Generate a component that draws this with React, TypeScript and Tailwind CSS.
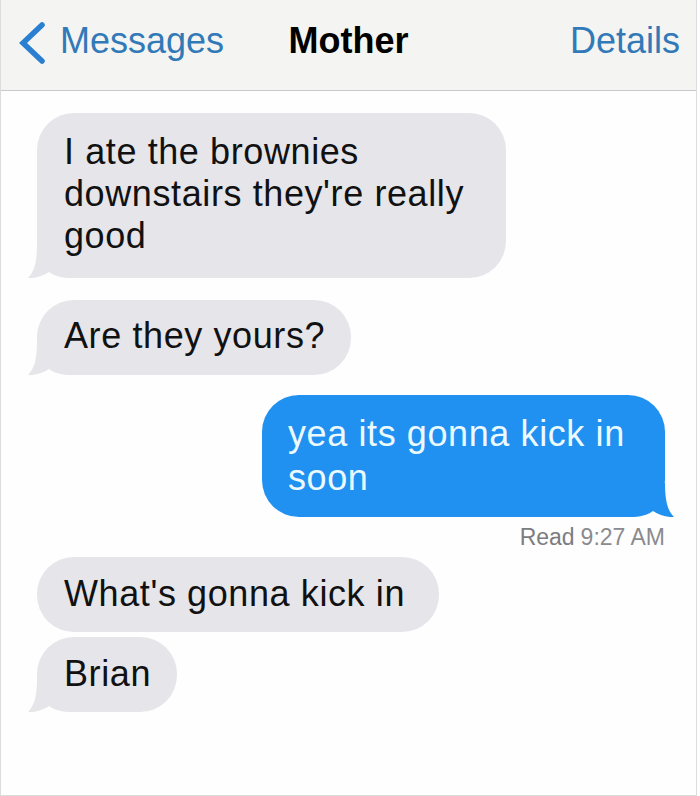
import React from "react";

const font = { fontFamily: '"Liberation Sans", Arial, sans-serif' };

function TailLeft({ color }: { color: string }) {
  return (
    <svg
      width="46"
      height="42"
      viewBox="0 0 46 42"
      className="absolute bottom-0 left-[-10px]"
    >
      <path
        d="M10 8 C10 27 7 36 1 42 C9 42.5 16 40 22 36 C28 40 34 42 46 42 L46 22 Z"
        fill={color}
      />
    </svg>
  );
}

function TailRight({ color }: { color: string }) {
  return (
    <svg
      width="46"
      height="42"
      viewBox="0 0 46 42"
      className="absolute bottom-0 right-[-10px]"
    >
      <path
        d="M36 8 C36 27 39 36 45 42 C37 42.5 30 40 24 36 C18 40 12 42 0 42 L0 22 Z"
        fill={color}
      />
    </svg>
  );
}

function Gray({
  children,
  w,
  tail,
  pad,
}: {
  children: React.ReactNode;
  w: string;
  tail?: boolean;
  pad: string;
}) {
  return (
    <div
      className={`relative rounded-[37px] bg-[#e5e5ea] pl-[27px] text-[36px] leading-[42px] tracking-[0.6px] text-[#111111] ${w} ${pad}`}
    >
      {tail && <TailLeft color="#e5e5ea" />}
      <div className="relative">{children}</div>
    </div>
  );
}

export default function App() {
  return (
    <div
      className="h-[796px] w-[700px] overflow-hidden bg-white"
      style={font}
    >
      <div className="h-[796px] w-[697px] border-x border-b border-[#dcdcdc] bg-[#fefefe]">
        {/* Header */}
        <div className="grid h-[91px] grid-cols-[1fr_auto_1fr] items-center border-b border-[#c9c9c9] bg-[#f4f4f2] pb-[9px] text-[36px]">
          <div className="flex items-center pl-[17px] text-[#3279b8]">
            <svg
              width="28"
              height="42"
              viewBox="0 0 28 42"
              className="mt-[4px]"
            >
              <polyline
                points="24,3 5,21 24,39"
                fill="none"
                stroke="#2b7fd0"
                strokeWidth="5.5"
                strokeLinecap="round"
                strokeLinejoin="miter"
              />
            </svg>
            <span className="ml-[14px]">Messages</span>
          </div>
          <div className="font-bold text-black">Mother</div>
          <div className="pr-[16px] text-right text-[#3279b8]">Details</div>
        </div>

        {/* Conversation */}
        <div className="flex flex-col pl-[36px] pr-[31px] pt-[22px]">
          <Gray w="w-[469px]" tail pad="pt-[18px] pb-[21px]">
            I ate the brownies
            <br />
            downstairs they're really
            <br />
            good
          </Gray>

          <div className="mt-[22px]">
            <Gray w="w-[314px]" tail pad="pt-[15px] pb-[18px]">
              Are they yours?
            </Gray>
          </div>

          <div className="mt-[20px] flex justify-end">
            <div className="relative w-[403px] rounded-[37px] bg-[#2090f1] pb-[17px] pl-[26px] pt-[17px] text-[36px] leading-[44px] tracking-[0.6px] text-[#eafaff]">
              <TailRight color="#2090f1" />
              <div className="relative">
                yea its gonna kick in
                <br />
                soon
              </div>
            </div>
          </div>

          <div className="mt-[6px] flex justify-end text-[23px] leading-[28px] text-[#8b8b8f]">
            <span className="text-[#7c7c80]">Read</span>
            <span className="ml-[6px]">9:27 AM</span>
          </div>

          <div className="mt-[6px]">
            <Gray w="w-[402px]" pad="pt-[16px] pb-[17px]">
              What's gonna kick in
            </Gray>
          </div>

          <div className="mt-[5px]">
            <Gray w="w-[140px]" tail pad="pt-[16px] pb-[17px]">
              Brian
            </Gray>
          </div>
        </div>
      </div>
    </div>
  );
}
